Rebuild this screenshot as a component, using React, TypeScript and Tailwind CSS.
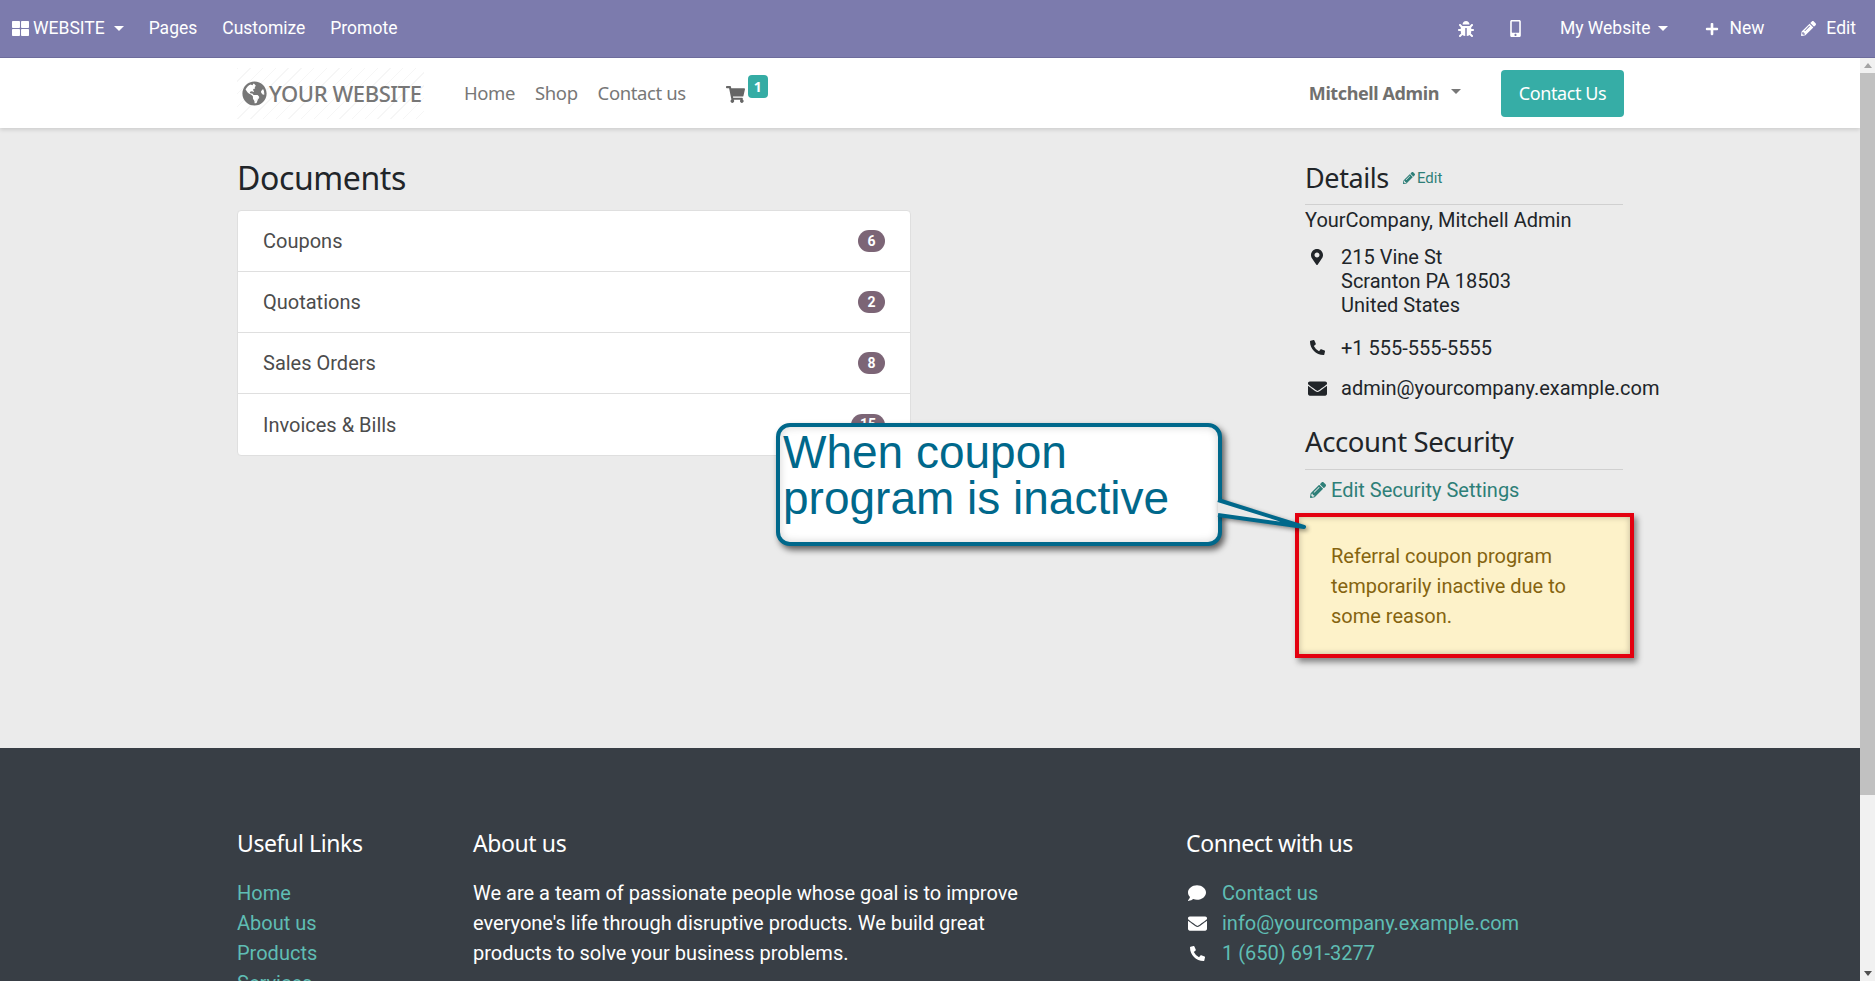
import { ReactNode } from "react";
import {
  FaBug,
  FaComment,
  FaEnvelope,
  FaGlobeAmericas,
  FaMapMarkerAlt,
  FaMobileAlt,
  FaPencilAlt,
  FaPhoneAlt,
  FaPlus,
  FaShoppingCart,
  FaThLarge,
} from "react-icons/fa";

const HEADING = "font-['Noto_Sans',sans-serif] tracking-[-0.4px]";

const Caret = ({ className = "" }: { className?: string }) => (
  <span className={`inline-block w-0 h-0 border-x-[5px] border-x-transparent border-t-[5px] border-t-current ${className}`} />
);

const TopBar = () => (
  <div className="h-[58px] shrink-0 bg-[#7c7bad] border-b border-[#6d6c9c] flex items-center justify-between text-white text-[17.5px] pl-3 pr-[19px]">
    <div className="flex items-center">
      <FaThLarge className="text-[17px]" />
      <span className="ml-1">WEBSITE</span>
      <Caret className="ml-[9px]" />
      <span className="ml-[25px]">Pages</span>
      <span className="ml-[25px]">Customize</span>
      <span className="ml-[25px]">Promote</span>
    </div>
    <div className="flex items-center">
      <FaBug className="text-[16px]" />
      <FaMobileAlt className="ml-[33px] text-[17px]" />
      <span className="ml-[36px]">My Website</span>
      <Caret className="ml-2" />
      <FaPlus className="ml-[37px] text-[14px]" />
      <span className="ml-[10px]">New</span>
      <FaPencilAlt className="ml-[37px] text-[15px]" />
      <span className="ml-[10px]">Edit</span>
    </div>
  </div>
);

const Header = () => (
  <div className="relative z-10 h-[70px] shrink-0 bg-white shadow-[0_2px_4px_rgba(0,0,0,0.12)]">
    <div className={`w-[1410px] mx-auto h-full pl-3 pr-[11px] flex items-center text-[#777] ${HEADING}`}>
      <div className="w-[187px] h-[51px] flex items-center pl-[5px] bg-[repeating-linear-gradient(135deg,#f6f6f6_0px,#f6f6f6_1px,transparent_1px,transparent_9px)]">
        <FaGlobeAmericas className="text-[25px] shrink-0" />
        <span className="ml-[2px] text-[22px] font-medium whitespace-nowrap">YOUR WEBSITE</span>
      </div>
      <div className="ml-[40px] flex items-center text-[18.5px]">
        <span>Home</span>
        <span className="ml-5">Shop</span>
        <span className="ml-5">Contact us</span>
        <div className="ml-10 flex">
          <FaShoppingCart className="text-[19px] mt-[2px] text-[#666]" />
          <span className="ml-[3px] -mt-[8px] w-[20px] h-[23px] rounded bg-[#35aca4] text-white text-[14px] font-bold flex items-center justify-center">1</span>
        </div>
      </div>
      <div className="ml-auto flex items-center">
        <span className="text-[18px] font-bold text-[#71706e]">Mitchell Admin</span>
        <Caret className="ml-3 text-[#777] -mt-1" />
        <span className="ml-10 w-[123px] h-[47px] rounded bg-[#36ada6] text-white text-[18px] flex items-center justify-center">Contact Us</span>
      </div>
    </div>
  </div>
);

const DocRow = ({ label, count }: { label: string; count: number }) => (
  <div className="h-[61px] flex items-center justify-between pl-[25px] pr-[25px] border-b border-[#dfdfdf] last:border-b-0">
    <span className="text-[20px] text-[#4c4c4c]">{label}</span>
    <span className="min-w-[27px] h-[22px] px-[9px] rounded-full bg-[#7c6576] text-white text-[14px] font-bold flex items-center justify-center">{count}</span>
  </div>
);

const InfoRow = ({ icon, children, className = "" }: { icon: ReactNode; children: ReactNode; className?: string }) => (
  <div className={`flex ${className}`}>
    <div className="w-[36px] shrink-0 flex justify-center pr-[12px] pt-[4px] text-[#212529]">{icon}</div>
    <div className="whitespace-nowrap">{children}</div>
  </div>
);

const Callout = () => (
  <div className="absolute z-20 left-[776px] top-[295px] w-[530px] h-[125px]">
    <div className="w-[446px] h-[123px] bg-white border-4 border-[#00688b] rounded-[14px] shadow-[3px_4px_6px_rgba(0,0,0,0.6),inset_0_0_8px_rgba(0,0,0,0.18)] pl-[3px] pt-[2px] font-['Liberation_Sans',sans-serif] text-[46px] leading-[46px] text-[#00688b]">
      When coupon<br />program is inactive
    </div>
    <svg className="absolute left-[440px] top-[75px] drop-shadow-[2px_2px_2px_rgba(0,0,0,0.45)]" width="90" height="40" viewBox="0 0 90 40">
      <path d="M2 2 L88 29 L2 17 Z" fill="#e9e9e9" />
      <path d="M2 2 L88 29 L2 17" fill="none" stroke="#00688b" strokeWidth="4" strokeLinejoin="round" />
    </svg>
  </div>
);

const Main = () => (
  <div className="relative h-[620px] bg-[#ebebeb]">
    <div className="w-[1410px] mx-auto px-3 flex justify-between">
      <div className="w-[674px]">
        <h1 className={`text-[32px] leading-[38px] mt-[31px] text-[#212529] ${HEADING}`}>Documents</h1>
        <div className="mt-[13px] bg-white border border-[#dfdfdf] rounded">
          <DocRow label="Coupons" count={6} />
          <DocRow label="Quotations" count={2} />
          <DocRow label="Sales Orders" count={8} />
          <DocRow label="Invoices & Bills" count={15} />
        </div>
      </div>
      <div className="w-[318px] text-[20px] leading-6 text-[#212529]">
        <div className={`flex items-center mt-[33px] pb-[10px] border-b border-[#d0d0d0] ${HEADING}`}>
          <span className="text-[27px] leading-[33px]">Details</span>
          <span className="ml-[14px] flex items-center text-[15px] text-[#2e7f78] font-['Roboto',sans-serif] tracking-normal">
            <FaPencilAlt className="text-[12px] mr-[2px]" />Edit
          </span>
        </div>
        <div className="mt-[3px]">YourCompany, Mitchell Admin</div>
        <InfoRow className="mt-[13px]" icon={<FaMapMarkerAlt className="text-[16px]" />}>
          215 Vine St<br />Scranton PA 18503<br />United States
        </InfoRow>
        <InfoRow className="mt-[19px]" icon={<FaPhoneAlt className="text-[15px]" />}>+1 555-555-5555</InfoRow>
        <InfoRow className="mt-[16px]" icon={<FaEnvelope className="text-[19px] -mt-[1px]" />}>admin@yourcompany.example.com</InfoRow>
        <h2 className={`mt-[25px] pb-[11px] border-b border-[#d0d0d0] text-[27.5px] leading-[33px] ${HEADING}`}>Account Security</h2>
        <div className="mt-[8px] flex items-center text-[#2e7f78]">
          <FaPencilAlt className="text-[16px] ml-[5px] mr-[5px]" />Edit Security Settings
        </div>
        <div className="relative z-10 mt-[11px] -ml-[10px] w-[339px] h-[145px] bg-[#fdf2c9] border-4 border-[#e3000f] shadow-[3px_4px_6px_rgba(0,0,0,0.45),inset_0_0_6px_rgba(0,0,0,0.25)] pl-[32px] pt-[24px] text-[#85640f] leading-[30px] whitespace-nowrap">
          Referral coupon program<br />temporarily inactive due to<br />some reason.
        </div>
      </div>
    </div>
    <Callout />
  </div>
);

const Footer = () => (
  <div className="bg-[#383e45] text-white text-[20px] leading-[30px]">
    <div className="w-[1410px] mx-auto px-3 pt-[77px] pb-10 flex">
      <div className="w-[236px]">
        <h5 className={`text-[23px] leading-[36px] mb-[17px] ${HEADING}`}>Useful Links</h5>
        <div className="text-[#5fbdb4]">
          <div>Home</div>
          <div>About us</div>
          <div>Products</div>
          <div>Services</div>
        </div>
      </div>
      <div className="w-[713px]">
        <h5 className={`text-[23px] leading-[36px] mb-[17px] ${HEADING}`}>About us</h5>
        <p className="w-[560px]">
          We are a team of passionate people whose goal is to improve everyone's life through disruptive products. We build great products to solve your business problems.
        </p>
      </div>
      <div>
        <h5 className={`text-[23px] leading-[36px] mb-[17px] ${HEADING}`}>Connect with us</h5>
        <div className="text-[#5fbdb4]">
          <div className="flex items-center"><span className="w-9 text-white"><FaComment className="ml-[2px] text-[18px]" /></span>Contact us</div>
          <div className="flex items-center"><span className="w-9 text-white"><FaEnvelope className="ml-[2px] text-[19px]" /></span>info@yourcompany.example.com</div>
          <div className="flex items-center"><span className="w-9 text-white"><FaPhoneAlt className="ml-[4px] text-[15px]" /></span>1 (650) 691-3277</div>
        </div>
      </div>
    </div>
  </div>
);

const Scrollbar = () => (
  <div className="w-[15px] shrink-0 bg-[#f1f1f1] flex flex-col items-center">
    <div className="h-[15px] flex items-center justify-center">
      <span className="w-0 h-0 border-x-4 border-x-transparent border-b-[5px] border-b-[#a3a3a3]" />
    </div>
    <div className="w-full h-[722px] bg-[#c1c1c1]" />
    <div className="mt-auto h-[15px] flex items-center justify-center">
      <span className="w-0 h-0 border-x-4 border-x-transparent border-t-[5px] border-t-[#505050]" />
    </div>
  </div>
);

export default function App() {
  return (
    <div className="h-[981px] w-[1875px] overflow-hidden flex flex-col font-['Roboto',sans-serif]">
      <TopBar />
      <div className="flex flex-1 min-h-0">
        <div className="flex-1 min-w-0 overflow-hidden">
          <Header />
          <Main />
          <Footer />
        </div>
        <Scrollbar />
      </div>
    </div>
  );
}
